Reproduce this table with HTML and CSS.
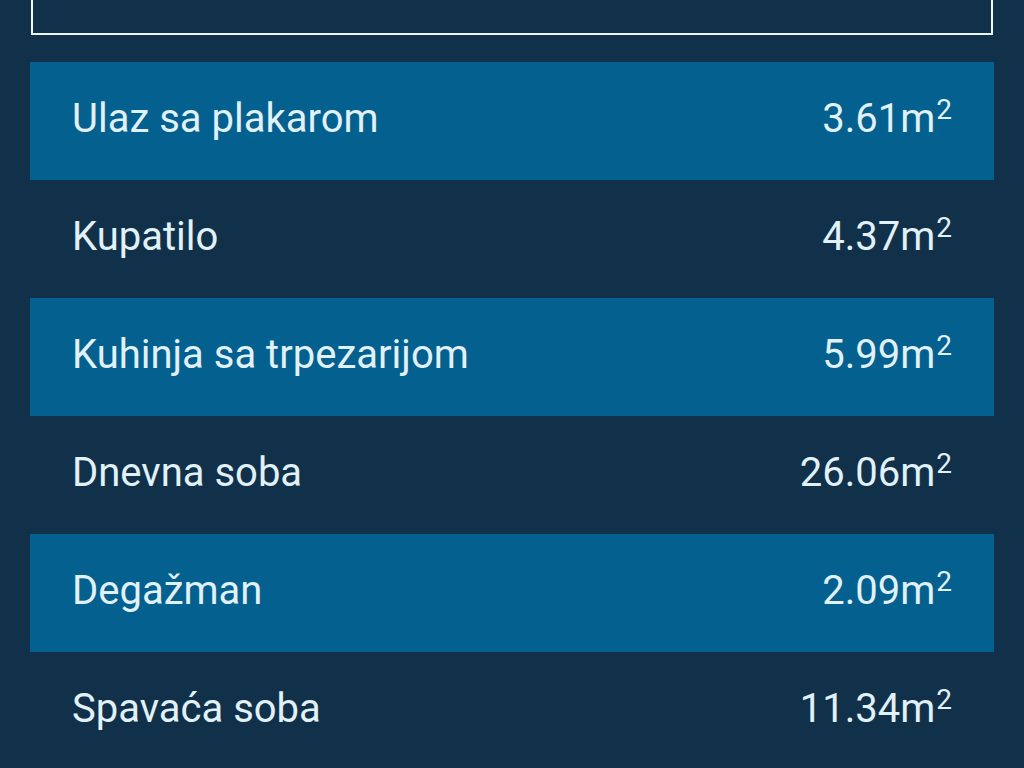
FILE: index.html
```html
<!DOCTYPE html>
<html lang="sr">
<head>
<meta charset="utf-8">
<title>Površine</title>
<link rel="stylesheet" href="styles.css">
</head>
<body>
<div class="page">
  <div class="frame"></div>
  <div class="rooms">
    <div class="room alt"><span class="name">Ulaz sa plakarom</span><span class="area">3.61m<sup>2</sup></span></div>
    <div class="room"><span class="name">Kupatilo</span><span class="area">4.37m<sup>2</sup></span></div>
    <div class="room alt"><span class="name">Kuhinja sa trpezarijom</span><span class="area">5.99m<sup>2</sup></span></div>
    <div class="room"><span class="name">Dnevna soba</span><span class="area">26.06m<sup>2</sup></span></div>
    <div class="room alt"><span class="name">Degažman</span><span class="area">2.09m<sup>2</sup></span></div>
    <div class="room"><span class="name">Spavaća soba</span><span class="area">11.34m<sup>2</sup></span></div>
  </div>
</div>
</body>
</html>
```

FILE: styles.css
```css
html, body {
  margin: 0;
  padding: 0;
  background: #11304a;
  overflow: hidden;
}
.page {
  padding: 0 30px;
  font-family: Roboto, "Noto Sans", sans-serif;
  color: #e1f1f8;
}
.frame {
  margin: -20px 1px 0;
  height: 51px;
  border: 2px solid #eef6fa;
}
.rooms {
  margin-top: 27px;
  display: flex;
  flex-direction: column;
}
.room {
  box-sizing: border-box;
  height: 118px;
  padding: 37px 42px 0;
  display: flex;
  justify-content: space-between;
  align-items: flex-start;
  font-size: 40px;
  line-height: 40px;
}
.room.alt {
  background: #03608f;
}
.area sup {
  font-size: 28px;
  line-height: 0;
  vertical-align: 13px;
  margin-left: 1px;
}
```
